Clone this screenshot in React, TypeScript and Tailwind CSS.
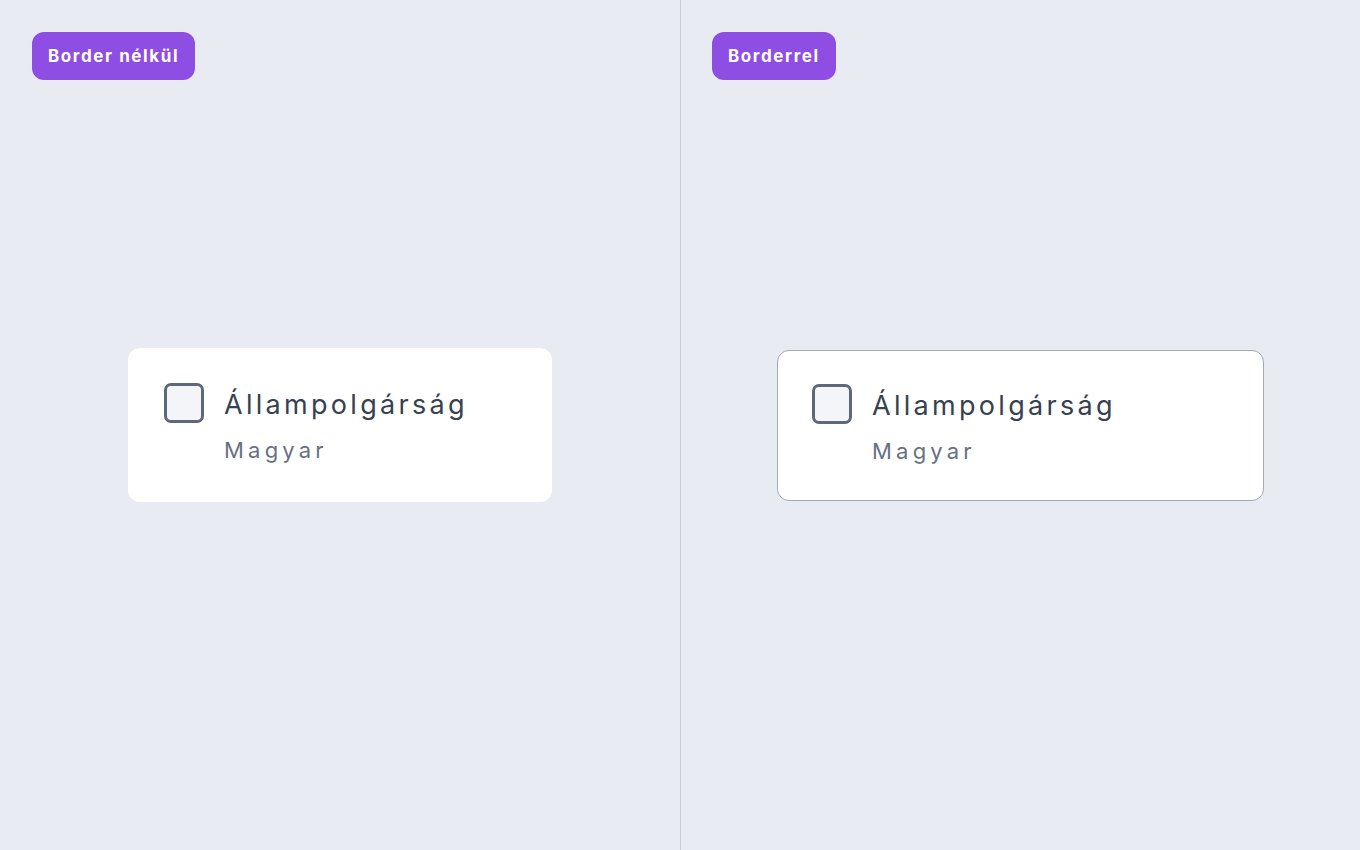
import React from "react";

function Card({ bordered, width }: { bordered?: boolean; width: string }) {
  return (
    <div
      className={
        "bg-white rounded-[12px] flex items-start gap-5 " +
        width +
        (bordered
          ? " border-[1.5px] border-[#a3aab6] pl-[34px] pt-[33px] pb-[34px]"
          : " pl-[36px] pt-[35px] pb-[37px]")
      }
    >
      <div className="w-10 h-10 shrink-0 rounded-[7px] border-[3px] border-[#5f6878] bg-[#f3f5f9]" />
      <div className="flex flex-col pt-[2px]">
        <div className="text-[27px] leading-[40px] tracking-[3.3px] text-[#374151] whitespace-nowrap">Állampolgárság</div>
        <div className="text-[22px] leading-[30px] tracking-[4.2px] text-[#667085] mt-[10px]">Magyar</div>
      </div>
    </div>
  );
}

function Badge({ children, left }: { children: React.ReactNode; left: string }) {
  return (
    <div
      className={
        "absolute top-8 h-12 px-4 pt-[2px] rounded-[12px] bg-[#8e4ee3] text-white font-bold text-[17px] tracking-[1.6px] flex items-center " +
        left
      }
    >
      {children}
    </div>
  );
}

export default function App() {
  return (
    <div
      className="w-[1360px] h-[850px] bg-[#e8ebf1] flex"
      style={{ fontFamily: "Inter, 'Noto Sans', sans-serif" }}
    >
      <div className="relative w-[680px] h-full flex items-center justify-center">
        <Badge left="left-8">Border nélkül</Badge>
        <Card width="w-[424px]" />
      </div>
      <div className="w-px h-full bg-[#c9ccd3]" />
      <div className="relative flex-1 h-full flex items-center justify-center">
        <Badge left="left-[31px]">Borderrel</Badge>
        <Card bordered width="w-[487px]" />
      </div>
    </div>
  );
}
